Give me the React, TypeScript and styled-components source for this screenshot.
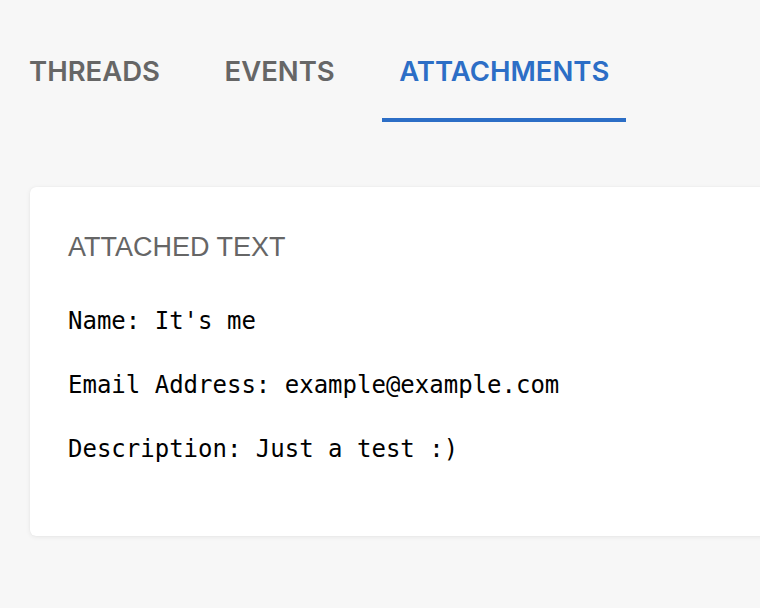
import React, { useState } from "react";
import styled, { createGlobalStyle } from "styled-components";

const GlobalStyle = createGlobalStyle`
  html, body {
    margin: 0;
    padding: 0;
    background-color: #f7f7f7;
    overflow: hidden;
  }
`;

const Page = styled.div`
  width: 760px;
  height: 608px;
  background-color: #f7f7f7;
  overflow: hidden;
`;

const TabBar = styled.nav`
  display: flex;
  gap: 30.5px;
  padding-left: 12px;
`;

const Tab = styled.button<{ $active?: boolean }>`
  appearance: none;
  background: none;
  border: none;
  border-bottom: 4px solid ${(p) => (p.$active ? "#2c6ec6" : "transparent")};
  padding: 55px 17px 31px;
  margin: 0;
  font-family: Inter, "Noto Sans", sans-serif;
  font-weight: 600;
  font-size: 27.5px;
  line-height: 32px;
  text-transform: uppercase;
  color: ${(p) => (p.$active ? "#2c6ec6" : "#666666")};
  cursor: pointer;
`;

const Card = styled.section`
  margin: 65px -20px 0 30px;
  height: 349px;
  box-sizing: border-box;
  padding: 44px 38px 0;
  background-color: #ffffff;
  border-radius: 6px;
  box-shadow: 0 1px 5px rgba(0, 0, 0, 0.07), 0 0 1px rgba(0, 0, 0, 0.08);
`;

const CardTitle = styled.h3`
  margin: 0 0 42px;
  font-family: "Helvetica Neue", "Liberation Sans", Arial, sans-serif;
  font-weight: 400;
  font-size: 27px;
  line-height: 32px;
  color: #666666;
  text-transform: uppercase;
`;

const TextLine = styled.p`
  margin: 0 0 32px;
  font-family: "DejaVu Sans Mono", Menlo, monospace;
  font-size: 24px;
  line-height: 32px;
  color: #000000;
  white-space: pre;
`;

const tabs = ["Threads", "Events", "Attachments"];

const lines = [
  "Name: It's me",
  "Email Address: example@example.com",
  "Description: Just a test :)",
];

const App: React.FC = () => {
  const [active, setActive] = useState("Attachments");

  return (
    <Page>
      <GlobalStyle />
      <TabBar>
        {tabs.map((t) => (
          <Tab key={t} $active={t === active} onClick={() => setActive(t)}>
            {t}
          </Tab>
        ))}
      </TabBar>
      <Card>
        <CardTitle>Attached Text</CardTitle>
        {lines.map((l) => (
          <TextLine key={l}>{l}</TextLine>
        ))}
      </Card>
    </Page>
  );
};

export default App;
